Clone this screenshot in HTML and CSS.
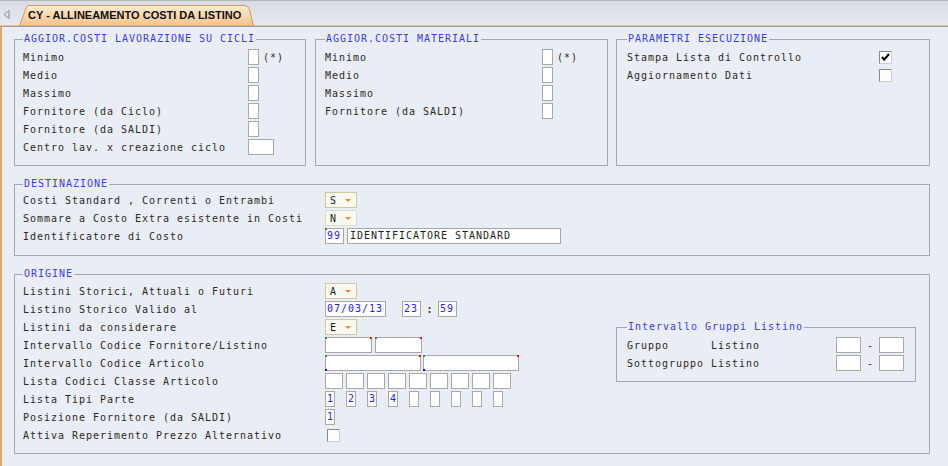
FILE: index.html
```html
<!DOCTYPE html>
<html lang="it">
<head>
<meta charset="utf-8">
<title>CY - ALLINEAMENTO COSTI DA LISTINO</title>
<link rel="stylesheet" href="styles.css">
</head>
<body>
<div class="topbar">
  <span class="nav">
    <svg width="7" height="9" viewBox="0 0 7 9"><path d="M6 0.5 L1 4.5 L6 8.5 Z" fill="none" stroke="#8a8e96" stroke-width="1"/></svg>
  </span>
  <div class="tab">
    <svg class="tab-bg" width="235" height="21" viewBox="0 0 235 21">
      <defs>
        <linearGradient id="tg" x1="0" y1="0" x2="0" y2="1">
          <stop offset="0" stop-color="#feebd2"/>
          <stop offset="1" stop-color="#f6c28a"/>
        </linearGradient>
      </defs>
      <path d="M0.5 21 L7.5 2 Q8.3 0.5 10 0.5 L225 0.5 Q229.5 0.5 230.5 4.5 L234.5 21 Z" fill="url(#tg)" stroke="#c59a68" stroke-width="1"/>
    </svg>
    <span class="tab-title">CY - ALLINEAMENTO COSTI DA LISTINO</span>
  </div>
</div>

<div class="content">
  <div class="toprow">
    <fieldset class="frame f1">
      <legend>AGGIOR.COSTI LAVORAZIONE SU CICLI</legend>
      <div class="row"><span class="lbl w225">Minimo</span><span class="box cb"></span><span class="note">(*)</span></div>
      <div class="row"><span class="lbl w225">Medio</span><span class="box cb"></span></div>
      <div class="row"><span class="lbl w225">Massimo</span><span class="box cb"></span></div>
      <div class="row"><span class="lbl w225">Fornitore (da Ciclo)</span><span class="box cb"></span></div>
      <div class="row"><span class="lbl w225">Fornitore (da SALDI)</span><span class="box cb"></span></div>
      <div class="row"><span class="lbl w225">Centro lav. x creazione ciclo</span><span class="box w26"></span></div>
    </fieldset>
    <fieldset class="frame f2">
      <legend>AGGIOR.COSTI MATERIALI</legend>
      <div class="row"><span class="lbl w217">Minimo</span><span class="box cb"></span><span class="note">(*)</span></div>
      <div class="row"><span class="lbl w217">Medio</span><span class="box cb"></span></div>
      <div class="row"><span class="lbl w217">Massimo</span><span class="box cb"></span></div>
      <div class="row"><span class="lbl w217">Fornitore (da SALDI)</span><span class="box cb"></span></div>
    </fieldset>
    <fieldset class="frame f3">
      <legend>PARAMETRI ESECUZIONE</legend>
      <div class="row"><span class="lbl w252">Stampa Lista di Controllo</span>
        <span class="chk"><svg width="11" height="11" viewBox="0 0 11 11"><path d="M2 5 L4.2 7.6 L9 2" fill="none" stroke="#000" stroke-width="2"/></svg></span></div>
      <div class="row"><span class="lbl w252">Aggiornamento Dati</span><span class="chk"></span></div>
    </fieldset>
  </div>

  <fieldset class="frame dest">
    <legend>DESTINAZIONE</legend>
    <div class="row"><span class="lbl w302">Costi Standard , Correnti o Entrambi</span><span class="sel">S<i class="caret"></i></span></div>
    <div class="row"><span class="lbl w302">Sommare a Costo Extra esistente in Costi</span><span class="sel sel-light">N<i class="caret"></i></span></div>
    <div class="row"><span class="lbl w302">Identificatore di Costo</span><span class="box w19 val">99<i class="dot tl"></i></span><span class="box w214 txt">IDENTIFICATORE STANDARD</span></div>
  </fieldset>

  <fieldset class="frame orig">
    <legend>ORIGINE</legend>
    <div class="orig-body">
      <div class="orig-rows">
        <div class="row"><span class="lbl w302">Listini Storici, Attuali o Futuri</span><span class="sel">A<i class="caret"></i></span></div>
        <div class="row"><span class="lbl w302">Listino Storico Valido al</span><span class="box w61 val">07/03/13</span><span class="box w19 val hh">23</span><span class="colon">:</span><span class="box w19 val">59</span></div>
        <div class="row"><span class="lbl w302">Listini da considerare</span><span class="sel">E<i class="caret"></i></span></div>
        <div class="row"><span class="lbl w302">Intervallo Codice Fornitore/Listino</span><span class="box w47"><i class="dot tl"></i><i class="dot tr"></i></span><span class="box w47 g3"><i class="dot tl"></i><i class="dot tr"></i></span></div>
        <div class="row"><span class="lbl w302">Intervallo Codice Articolo</span><span class="box w96"><i class="dot tl"></i><i class="dot tr"></i><i class="dot bl"></i></span><span class="box w96 g3"><i class="dot tl"></i><i class="dot tr"></i><i class="dot bl"></i></span></div>
        <div class="row"><span class="lbl w302">Lista Codici Classe Articolo</span>
          <span class="multi m3"><span class="box w18"></span><span class="box w18"></span><span class="box w18"></span><span class="box w18"></span><span class="box w18"></span><span class="box w18"></span><span class="box w18"></span><span class="box w18"></span><span class="box w18"></span></span></div>
        <div class="row"><span class="lbl w302">Lista Tipi Parte</span>
          <span class="multi m11"><span class="box w10 val c">1</span><span class="box w10 val c">2</span><span class="box w10 val c">3</span><span class="box w10 val c">4</span><span class="box w10"></span><span class="box w10"></span><span class="box w10"></span><span class="box w10"></span><span class="box w10"></span></span></div>
        <div class="row"><span class="lbl w302">Posizione Fornitore (da SALDI)</span><span class="box w10 val c">1</span></div>
        <div class="row"><span class="lbl w302">Attiva Reperimento Prezzo Alternativo</span><span class="chk ml2"></span></div>
      </div>
      <fieldset class="frame grp">
        <legend>Intervallo Gruppi Listino</legend>
        <div class="row"><span class="lbl w209">Gruppo      Listino</span><span class="box w25"></span><span class="dash">-</span><span class="box w25"></span></div>
        <div class="row"><span class="lbl w209">Sottogruppo Listino</span><span class="box w25"></span><span class="dash">-</span><span class="box w25"></span></div>
      </fieldset>
    </div>
  </fieldset>
</div>
</body>
</html>
```

FILE: styles.css
```css
html, body {
  margin: 0;
  padding: 0;
}
body {
  width: 948px;
  height: 466px;
  overflow: hidden;
  background: #e9edf5;
  font-family: "DejaVu Sans Mono", "Liberation Mono", monospace;
  font-size: 10px;
  letter-spacing: 0.98px;
  color: #2d2823;
}

/* ---------- top bar with tab ---------- */
.topbar {
  height: 24px;
  border-top: 1px solid #b2b5bb;
  border-bottom: 1px solid #e9c79c;
  background: linear-gradient(#d9dce3, #e6e9ef);
  display: flex;
  align-items: flex-end;
  padding-left: 3px;
}
.nav {
  width: 16px;
  height: 20px;
  display: flex;
  align-items: center;
  margin-bottom: 1px;
}
.nav svg { display: block; }
.tab {
  position: relative;
  width: 235px;
  height: 21px;
  margin-bottom: -1px;
}
.tab-bg {
  position: absolute;
  left: 0;
  top: 0;
}
.tab-title {
  position: relative;
  display: block;
  padding-left: 9px;
  line-height: 21px;
  font-family: "Liberation Sans", Arial, sans-serif;
  font-weight: bold;
  font-size: 11px;
  letter-spacing: 0;
  color: #111;
}

/* ---------- content ---------- */
.content {
  border-top: 1px solid #9a9ea6;
  border-left: 2px solid #eba263;
  padding: 5px 0 0 12px;
  height: 440px;
}
.toprow {
  display: flex;
  align-items: stretch;
}

.frame {
  margin: 0;
  border: 1px solid #a3a7af;
  padding: 2px 8px 9px 8px;
  min-width: 0;
  box-sizing: border-box;
}
.frame legend {
  padding: 0 1px;
  line-height: 14px;
  height: 14px;
  color: #3a3af0;
}

.f1 { width: 292px; }
.f2 { width: 293px; margin-left: 9px; padding-left: 9px; }
.f3 { width: 314px; margin-left: 8px; padding-left: 10px; }

.dest {
  width: 916px;
  margin-top: 11px;
  padding-top: 0;
  padding-bottom: 10px;
}
.orig {
  width: 916px;
  margin-top: 11px;
  padding-top: 1px;
  padding-bottom: 9px;
}
.orig-body {
  display: flex;
  align-items: flex-start;
}
.orig-rows {
  width: 593px;
  flex: none;
}
.grp {
  width: 300px;
  flex: none;
  margin-top: 38px;
  padding: 2px 8px 9px 10px;
}

/* ---------- rows ---------- */
.row {
  display: flex;
  align-items: center;
  height: 18px;
  white-space: pre;
}
.lbl {
  flex: none;
  white-space: pre;
}
.w225 { width: 225px; }
.w217 { width: 217px; }
.w252 { width: 252px; }
.w302 { width: 302px; }
.w209 { width: 209px; }

.note { margin-left: 4px; }

/* ---------- controls ---------- */
.box {
  position: relative;
  flex: none;
  display: inline-block;
  box-sizing: border-box;
  height: 16px;
  border: 1px solid #a8a8a8;
  background: #ffffff;
  line-height: 14px;
  padding-left: 1px;
  overflow: visible;
}
.box.cb { width: 11px; }
.w10 { width: 10px; }
.w18 { width: 18px; }
.w19 { width: 19px; }
.w25 { width: 25px; }
.w26 { width: 26px; }
.w47 { width: 47px; }
.w61 { width: 61px; }
.w96 { width: 96px; }
.w214 { width: 214px; margin-left: 3px; }
.g3 { margin-left: 3px; }
.w96.g3 { margin-left: 2px; }

.val { color: #2323ee; }
.txt { color: #1d1d1d; padding-left: 2px; }
.c { padding-left: 0; text-align: center; letter-spacing: 0; }
.hh { margin-left: 16px; }
.colon {
  width: 17px;
  text-align: center;
  color: #3a3320;
  font-weight: bold;
  letter-spacing: 0;
}

.multi { display: flex; }
.m3 { gap: 3px; }
.m11 { gap: 11px; }

.dash {
  width: 18px;
  text-align: center;
  letter-spacing: 0;
}

.dot {
  position: absolute;
  width: 2px;
  height: 2px;
}
.dot.tl { top: -1px; left: -1px; background: #3b8c3b; }
.dot.tr { top: -1px; right: -1px; background: #ff0000; }
.dot.bl { bottom: -1px; left: -1px; background: #0000ff; }

.sel {
  flex: none;
  box-sizing: border-box;
  width: 32px;
  height: 16px;
  border: 1px solid #d2c69e;
  background: #f9f9f1;
  display: flex;
  align-items: center;
  padding-left: 4px;
  color: #1d1a16;
}
.sel-light { border-color: #dcdcd6; }
.caret {
  margin-left: auto;
  margin-right: 5px;
  width: 0;
  height: 0;
  border-left: 3px solid transparent;
  border-right: 3px solid transparent;
  border-top: 3px solid #f08a1e;
}

.chk {
  flex: none;
  box-sizing: border-box;
  width: 13px;
  height: 13px;
  border: 1px solid #8a8a8a;
  border-right-color: #cfcfcf;
  border-bottom-color: #cfcfcf;
  background: #fdfdfd;
  display: flex;
  align-items: center;
  justify-content: center;
}
.chk svg { display: block; }
.ml2 { margin-left: 2px; }
```
